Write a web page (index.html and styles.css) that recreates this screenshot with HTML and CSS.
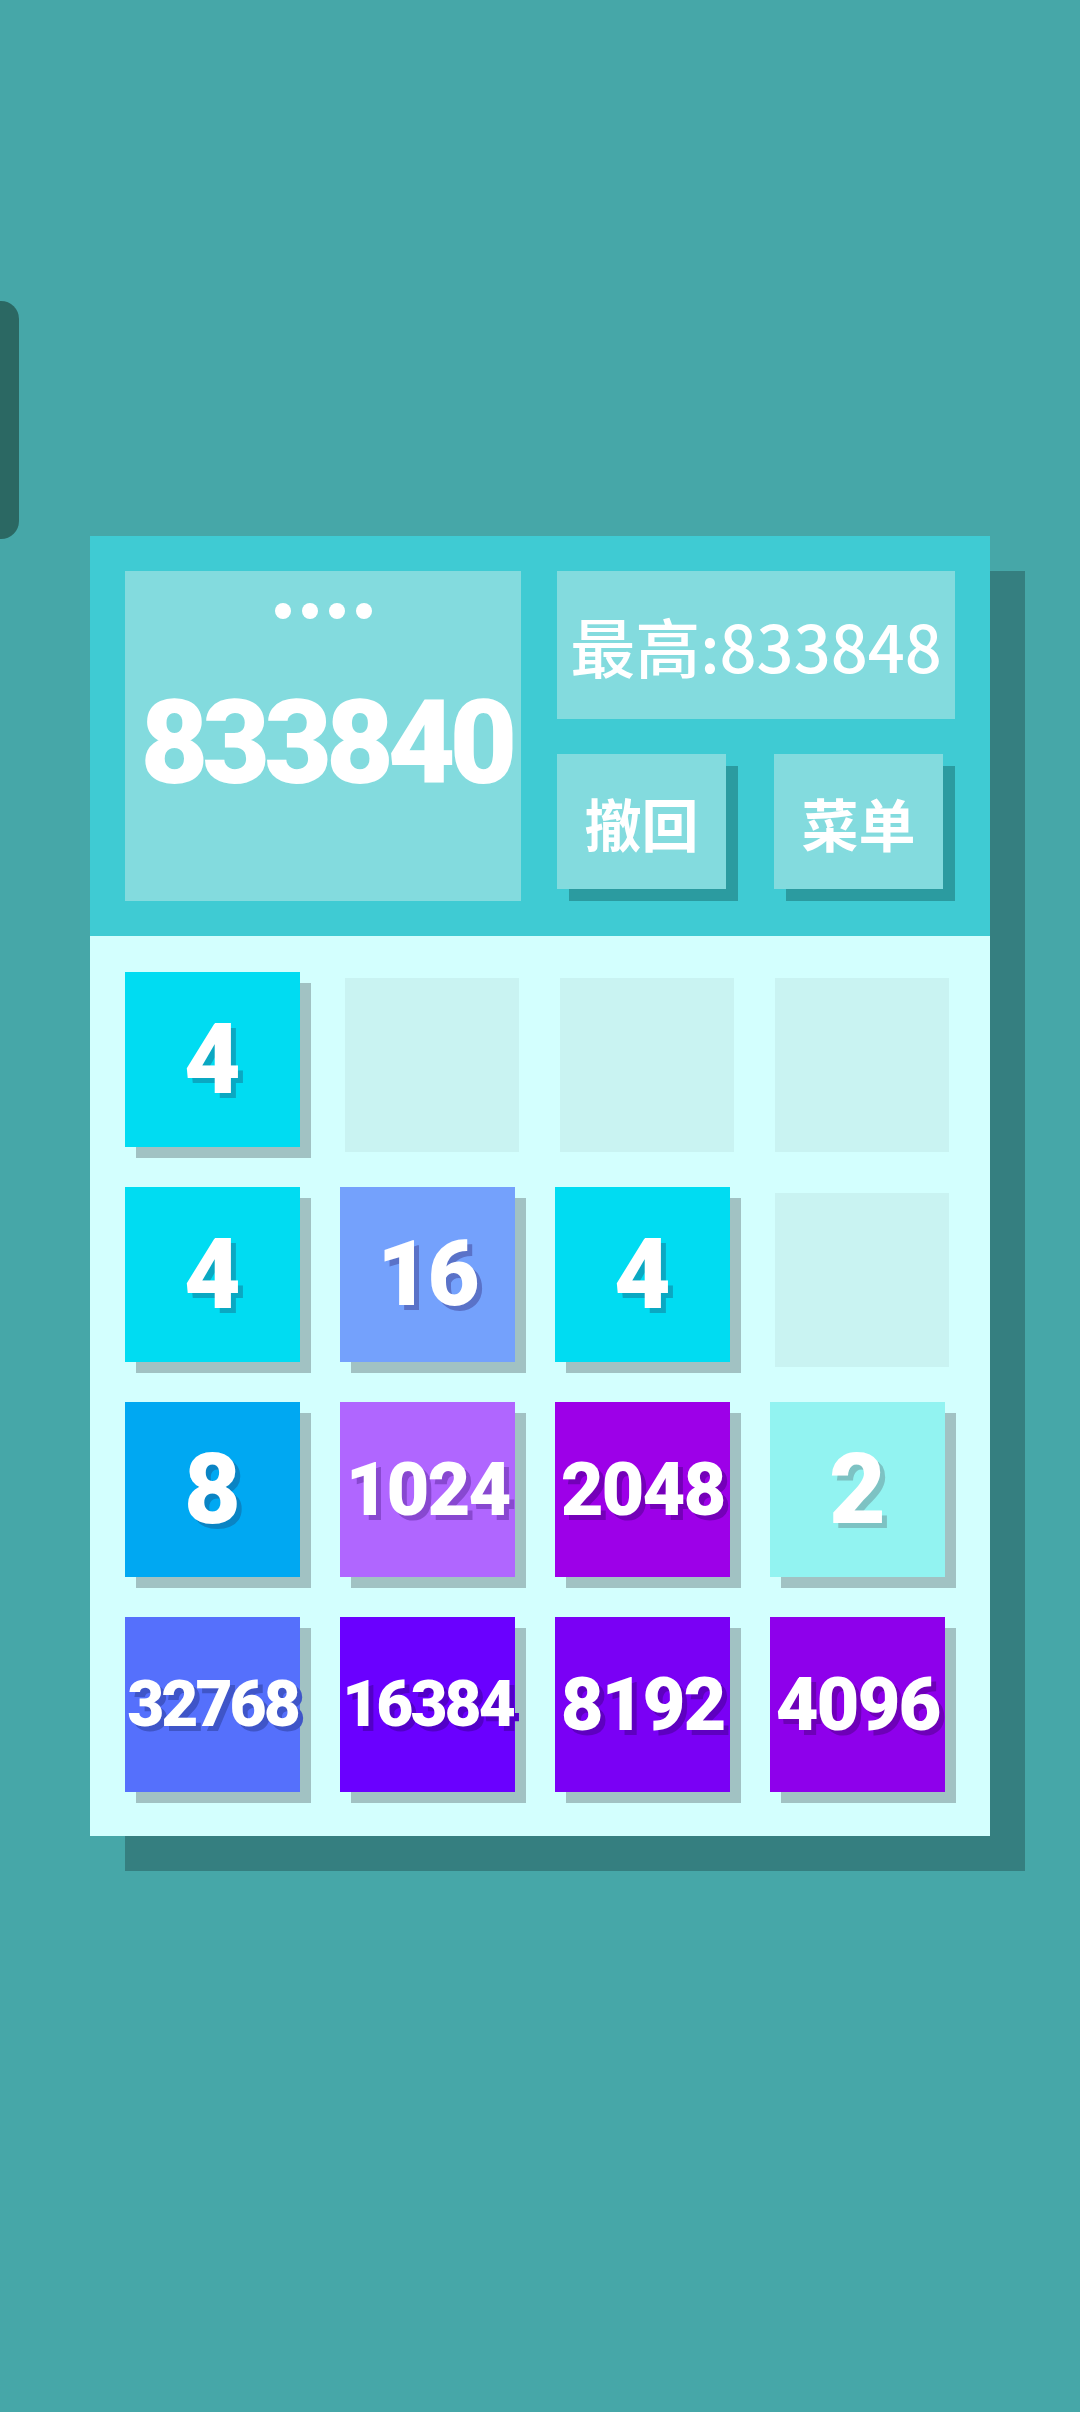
FILE: index.html
```html
<!DOCTYPE html>
<html lang="zh-CN">
<head>
<meta charset="utf-8">
<title>2048</title>
<link rel="stylesheet" href="styles.css">
</head>
<body>
<div class="handle"></div>
<main class="stage">
  <section class="game">
    <header class="top">
      <div class="score">
        <div class="dots"><span></span><span></span><span></span><span></span></div>
        <div class="score-num">833840</div>
      </div>
      <div class="side">
        <div class="best">最高:833848</div>
        <div class="btns">
          <div class="btn">撤回</div>
          <div class="btn">菜单</div>
        </div>
      </div>
    </header>
    <div class="board">
      <div class="tile v4 d1">4</div>
      <div class="cell"></div>
      <div class="cell"></div>
      <div class="cell"></div>

      <div class="tile v4 d1">4</div>
      <div class="tile v16 d2">16</div>
      <div class="tile v4 d1">4</div>
      <div class="cell"></div>

      <div class="tile v8 d1">8</div>
      <div class="tile v1024 d4">1024</div>
      <div class="tile v2048 d4">2048</div>
      <div class="tile v2 d1">2</div>

      <div class="tile v32768 d5">32768</div>
      <div class="tile v16384 d5">16384</div>
      <div class="tile v8192 d4">8192</div>
      <div class="tile v4096 d4">4096</div>
    </div>
  </section>
</main>
</body>
</html>
```
FILE: styles.css
```css
html, body {
  margin: 0;
  padding: 0;
}
body {
  width: 1080px;
  height: 2412px;
  background: #46a7a8;
  position: relative;
  overflow: hidden;
  font-family: "Roboto", "Noto Sans CJK SC", sans-serif;
}
.handle {
  position: absolute;
  left: 0;
  top: 301px;
  width: 19px;
  height: 238px;
  background: #2b6863;
  border-radius: 0 18px 18px 0;
}
.stage {
  padding: 536px 0 0 90px;
}
.game {
  width: 900px;
  box-shadow: 35px 35px 0 #357f80;
}
.top {
  display: flex;
  gap: 36px;
  padding: 35px;
  background: #3fcbd3;
}
.score {
  width: 396px;
  height: 330px;
  background: #83dbde;
  display: flex;
  flex-direction: column;
  align-items: center;
  box-sizing: border-box;
  padding-top: 32px;
}
.dots {
  display: flex;
  gap: 11px;
}
.dots span {
  width: 16px;
  height: 16px;
  border-radius: 50%;
  background: #ffffff;
}
.score-num {
  margin-top: 66px;
  font-family: "Roboto", sans-serif;
  font-weight: 900;
  font-size: 117px;
  line-height: 1;
  letter-spacing: -6px;
  padding-left: 6px;
  color: #ffffff;
}
.side {
  width: 398px;
  display: flex;
  flex-direction: column;
  gap: 35px;
}
.best {
  height: 148px;
  background: #83dbde;
  display: flex;
  align-items: center;
  justify-content: center;
  color: #ffffff;
  font-family: "Noto Sans CJK SC", sans-serif;
  font-weight: 500;
  font-size: 65px;
}
.btns {
  display: flex;
  justify-content: space-between;
  padding-right: 12px;
}
.btn {
  width: 169px;
  height: 135px;
  background: #83dbde;
  box-shadow: 12px 12px 0 #2b9ba0;
  display: flex;
  align-items: center;
  justify-content: center;
  color: #ffffff;
  font-family: "Noto Sans CJK SC", sans-serif;
  font-weight: 700;
  font-size: 57px;
}
.board {
  display: grid;
  grid-template-columns: repeat(4, 175px);
  grid-auto-rows: 175px;
  gap: 40px;
  padding: 36px 45px 44px 35px;
  background: #d3fffe;
}
.cell {
  background: #c9f3f2;
  transform: translate(5px, 6px);
  width: 174px;
  height: 174px;
}
.tile {
  display: flex;
  align-items: center;
  justify-content: center;
  color: #ffffff;
  font-family: "Roboto", sans-serif;
  font-weight: 900;
  line-height: 1;
  box-shadow: 11px 11px 0 #a1c2c3;
}
.d1 { font-size: 98px; }
.d2 { font-size: 90px; letter-spacing: -2px; }
.d4 { font-size: 74px; letter-spacing: -2px; }
.d5 { font-size: 64px; letter-spacing: -3px; }

.v2 { background: #92f3f1; text-shadow: 5px 5px 0 #7dc2c3; }
.v4 { background: #00dcf2; text-shadow: 5px 5px 0 #0aa8c2; }
.v8 { background: #00a8f2; text-shadow: 5px 5px 0 #0a84c4; }
.v16 { background: #74a1fc; text-shadow: 5px 5px 0 #5a72c8; }
.v1024 { background: #b066ff; text-shadow: 5px 5px 0 #8848d0; }
.v2048 { background: #9d00e8; text-shadow: 5px 5px 0 #7400b8; }
.v4096 { background: #8e00eb; text-shadow: 5px 5px 0 #6e00b8; }
.v8192 { background: #7a00f5; text-shadow: 5px 5px 0 #5e00c0; }
.v16384 { background: #6a00ff; text-shadow: 5px 5px 0 #5200c8; }
.v32768 { background: #5570fc; text-shadow: 5px 5px 0 #3f55c8; }
```
